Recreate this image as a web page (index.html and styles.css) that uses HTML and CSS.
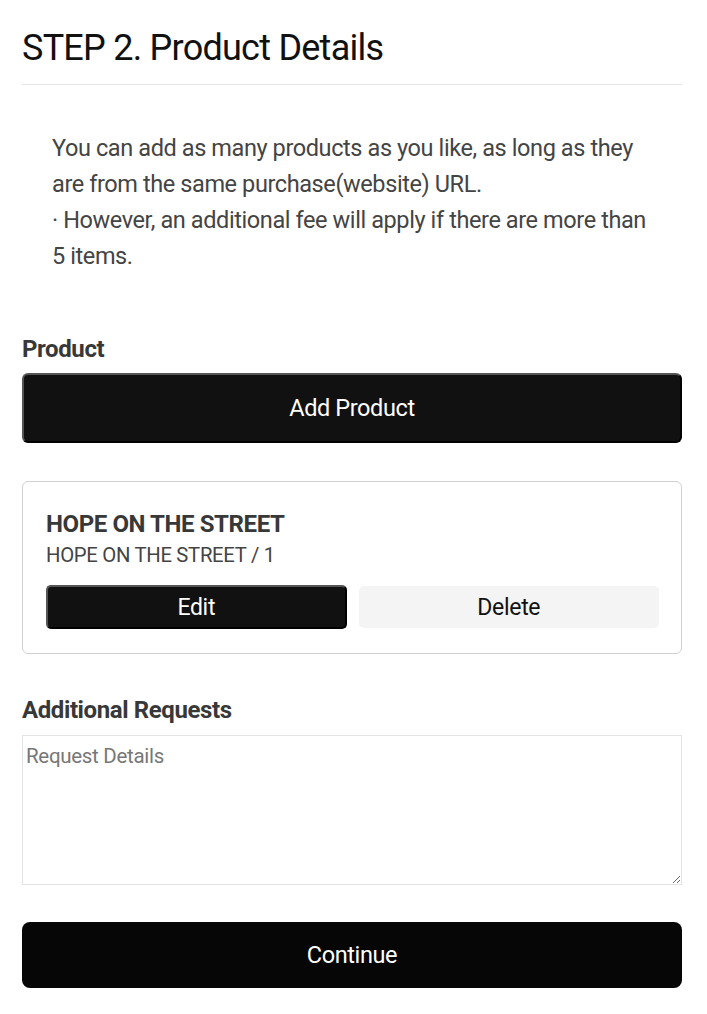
FILE: index.html
```html
<!DOCTYPE html>
<html lang="en">
<head>
<meta charset="utf-8">
<title>STEP 2. Product Details</title>
<link rel="stylesheet" href="styles.css">
</head>
<body>
<main class="page">
  <h1 class="title">STEP 2. Product Details</h1>
  <div class="notice">
    <p>You can add as many products as you like, as long as they are from the same purchase(website) URL.</p>
    <p>· However, an additional fee will apply if there are more than 5 items.</p>
  </div>

  <section class="section">
    <h2 class="label">Product</h2>
    <button class="btn btn-dark btn-add" type="button">Add Product</button>
  </section>

  <div class="card">
    <div class="card-title">HOPE ON THE STREET</div>
    <div class="card-sub">HOPE ON THE STREET / 1</div>
    <div class="card-actions">
      <button class="btn btn-dark btn-small" type="button">Edit</button>
      <button class="btn btn-light btn-small" type="button">Delete</button>
    </div>
  </div>

  <section class="section requests">
    <h2 class="label">Additional Requests</h2>
    <textarea class="textarea" placeholder="Request Details"></textarea>
  </section>

  <button class="btn-continue" type="button">Continue</button>
</main>
</body>
</html>
```

FILE: styles.css
```css
* { box-sizing: border-box; }
html, body { margin: 0; padding: 0; background: #fff; }
body {
  font-family: Roboto, "Liberation Sans", sans-serif;
  color: #111;
}
.page {
  width: 660px;
  margin: 0 22px;
  padding-top: 28px;
  display: flex;
  flex-direction: column;
}
.title {
  margin: 0;
  font-size: 36px;
  font-weight: 400;
  letter-spacing: -0.75px;
  line-height: 40px;
  color: #111;
  padding-bottom: 16px;
  border-bottom: 1px solid #e5e5ea;
}
.notice {
  padding: 45px 24px 0 30px;
  color: #444;
  font-size: 23.5px;
  line-height: 36px;
  letter-spacing: -0.4px;
}
.notice p { margin: 0; }
.section { margin-top: 60px; display: flex; flex-direction: column; }
.label {
  margin: 0 0 9px 0;
  font-size: 24px;
  font-weight: 700;
  line-height: 30px;
  color: #383838;
  letter-spacing: -0.4px;
}
.btn {
  font-family: inherit;
  cursor: pointer;
  display: flex;
  align-items: center;
  justify-content: center;
}
.btn-dark {
  background: #111;
  color: #fff;
  border-style: solid;
  border-width: 2px;
  border-color: #555 #000 #000 #555;
}
.btn-add {
  height: 70px;
  border-radius: 6px;
  font-size: 23.5px;
  letter-spacing: -0.4px;
}
.card {
  margin-top: 38px;
  border: 1px solid #d0d0d0;
  border-radius: 6px;
  padding: 27px 22px 24px 23px;
}
.card-title {
  font-size: 24px;
  font-weight: 700;
  color: #383838;
  line-height: 30px;
  letter-spacing: -0.4px;
}
.card-sub {
  margin-top: 3px;
  font-size: 20.3px;
  color: #444;
  line-height: 26px;
  letter-spacing: -0.3px;
}
.card-actions {
  margin-top: 17px;
  display: grid;
  grid-template-columns: 1fr 1fr;
  gap: 12px;
}
.btn-small {
  height: 44px;
  border-radius: 5px;
  font-size: 23px;
  letter-spacing: -0.3px;
}
.btn-light {
  background: #f4f4f4;
  color: #111;
  border: 0;
  height: 42px;
  margin-top: 1px;
}
.requests { margin-top: 41px; }
.requests .label { margin-bottom: 10px; }
.textarea {
  display: block;
  width: 100%;
  height: 150px;
  border: 1px solid #e3e3e3;
  padding: 8px 3px;
  font-family: inherit;
  font-size: 20.5px;
  line-height: 24px;
  color: #333;
  resize: vertical;
  margin: 0;
}
.textarea::placeholder { color: #777; letter-spacing: -0.3px; }
.btn-continue {
  margin-top: 37px;
  height: 66px;
  border: 0;
  border-radius: 8px;
  background: #060606;
  color: #fff;
  font-family: inherit;
  font-size: 23.5px;
  letter-spacing: -0.4px;
  cursor: pointer;
}
```
